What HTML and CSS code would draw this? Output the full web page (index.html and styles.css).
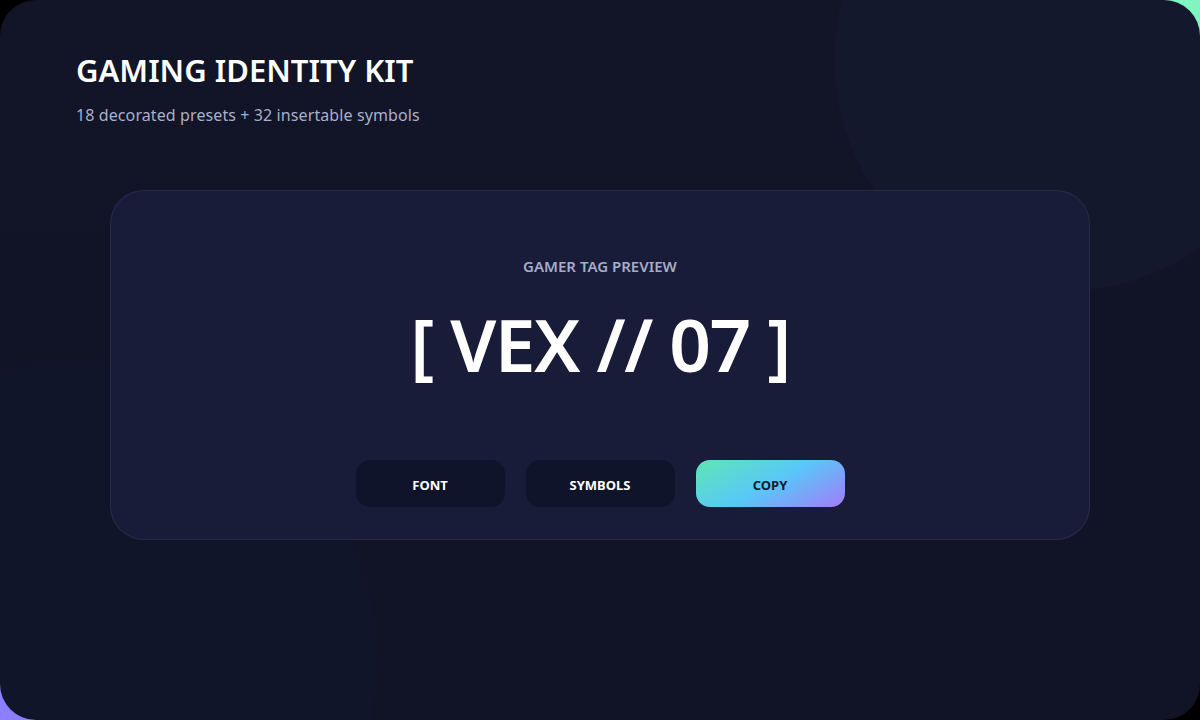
FILE: index.html
```html
<!DOCTYPE html>
<html lang="en">
<head>
<meta charset="utf-8">
<title>Gaming Identity Kit</title>
<link rel="stylesheet" href="styles.css">
</head>
<body>
<main class="panel">
  <header class="head">
    <h1 class="title">GAMING IDENTITY KIT</h1>
    <p class="subtitle">18 decorated presets + 32 insertable symbols</p>
  </header>
  <section class="card">
    <div class="label">GAMER TAG PREVIEW</div>
    <div class="tag">[ VEX // 07 ]</div>
    <div class="actions">
      <button class="btn">FONT</button>
      <button class="btn">SYMBOLS</button>
      <button class="btn btn-copy">COPY</button>
    </div>
  </section>
</main>
</body>
</html>
```

FILE: styles.css
```css
html, body {
  margin: 0;
  padding: 0;
  width: 1200px;
  height: 720px;
  overflow: hidden;
}

body {
  background:
    radial-gradient(circle at 100% 0%, #80f5bf 0 70px, transparent 71px),
    radial-gradient(circle at 0% 100%, #8a80ff 0 70px, transparent 71px),
    #000;
  font-family: "Noto Sans", "Open Sans", sans-serif;
}

.panel {
  box-sizing: border-box;
  width: 1200px;
  height: 720px;
  border-radius: 36px;
  padding: 51px 0 0;
  background:
    radial-gradient(circle at 1065px 60px, #14182c 0 230px, rgba(20, 24, 44, 0) 231px),
    radial-gradient(circle at 78px 660px, #11152a 0 298px, rgba(17, 21, 42, 0) 299px),
    linear-gradient(180deg, #121528 0%, #111426 100%);
  display: flex;
  flex-direction: column;
}

.head {
  padding-left: 76px;
}

.title {
  margin: 0;
  font-size: 31px;
  line-height: 38px;
  font-weight: 600;
  color: #ffffff;
  letter-spacing: 0;
}

.subtitle {
  margin: 14px 0 0;
  font-size: 16px;
  line-height: 24px;
  color: #a9afcb;
  letter-spacing: 0.1px;
}

.card {
  box-sizing: border-box;
  width: 980px;
  height: 350px;
  margin: 63px auto 0;
  border-radius: 34px;
  border: 1px solid rgba(255, 255, 255, 0.07);
  background: #181c39;
  display: flex;
  flex-direction: column;
  align-items: center;
  padding-top: 65px;
}

.label {
  font-size: 15px;
  line-height: 20px;
  font-weight: 600;
  color: #a6acc8;
}

.tag {
  margin-top: 31px;
  font-size: 73px;
  line-height: 73px;
  font-weight: 600;
  color: #ffffff;
  white-space: pre;
  letter-spacing: -1.5px;
}

.actions {
  margin-top: 80px;
  display: flex;
  gap: 21px;
}

.btn {
  width: 149px;
  height: 47px;
  border: 0;
  border-radius: 14px;
  background: #10142a;
  color: #ffffff;
  font-family: "Noto Sans", "Open Sans", sans-serif;
  font-size: 13px;
  font-weight: 700;
  letter-spacing: 0;
  padding: 3px 0 0;
}

.btn-copy {
  color: #141a30;
  background: linear-gradient(150deg, #5ee6b4 0%, #58c8f8 50%, #a37bf7 100%);
}
```
